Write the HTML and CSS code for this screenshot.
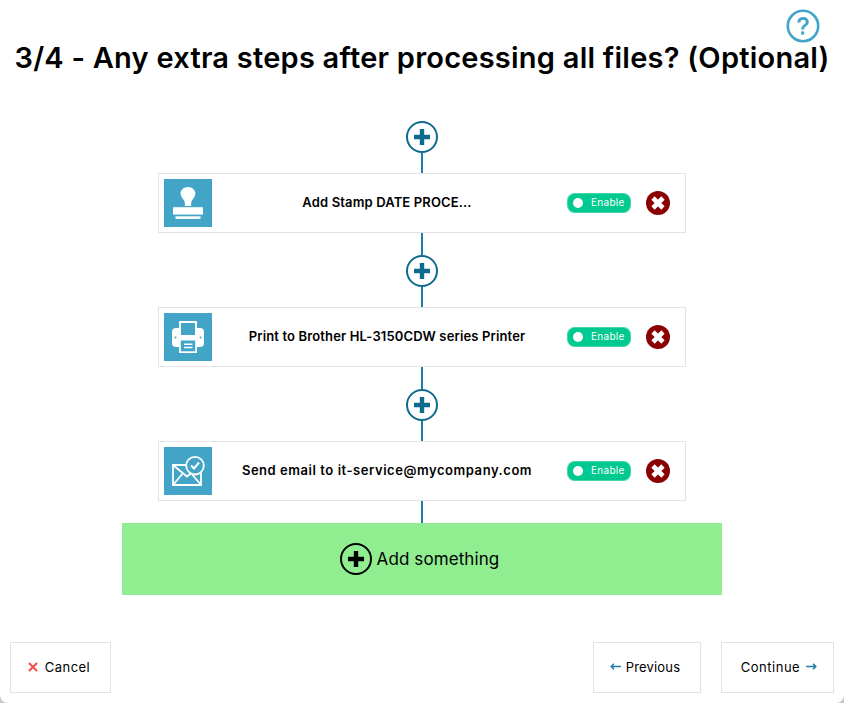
FILE: index.html
```html
<!DOCTYPE html>
<html lang="en">
<head>
<meta charset="utf-8">
<title>Extra steps</title>
<link rel="stylesheet" href="styles.css">
</head>
<body>
<main class="page">
  <a class="help" aria-label="Help">
    <svg width="34" height="34" viewBox="0 0 34 34"><circle cx="17" cy="17" r="15.200" fill="none" stroke="#42a5c8" stroke-width="2.600"/><path d="M11.400 13.400c0-3.200 2.400-5.300 5.700-5.300 3.200 0 5.600 1.900 5.600 4.800 0 2.200-1.200 3.300-2.700 4.400-1.400 1-1.900 1.700-1.900 3.300h-2.900c0-2.600.8-3.700 2.500-4.900 1.300-1 2-1.600 2-2.700 0-1.300-1-2.200-2.600-2.200-1.700 0-2.700 1-2.800 2.600z" fill="#42a5c8"/><rect x="15.100" y="22.400" width="3.100" height="3.200" fill="#42a5c8"/></svg>
  </a>
  <h1 class="title">3/4 - Any extra steps after processing all files? (Optional)</h1>
  <section class="flow">
    <button class="add-node" aria-label="Add step"><svg class="plus" viewBox="0 0 32 32"><circle cx="16" cy="16" r="15" fill="#fff" stroke="#0f6b8d" stroke-width="2"/><path d="M16 8v16M8 16h16" stroke="#0f6b8d" stroke-width="4.400"/></svg></button>
    <div class="line"></div>
    <article class="card">
      <div class="thumb">
        <svg width="48" height="48" viewBox="0 0 48 48"><path d="M24 8c-4.200 0-7.400 2.900-7.400 6.600 0 2.600 1.500 4.300 2.800 6 .9 1.300 1.500 2.600 1.500 4.400v2h6.200v-2c0-1.800.6-3.100 1.500-4.400 1.300-1.700 2.800-3.400 2.800-6C31.400 10.900 28.200 8 24 8z" fill="#fff"/><path d="M9 28.200h30v7.400H9z" fill="#fff"/><path d="M11.500 37.300h25v2.600h-25z" fill="#fff"/></svg>
      </div>
      <div class="name">Add Stamp DATE PROCE...</div>
      <div class="toggle"><span class="knob"></span><span class="toggle-text">Enable</span></div>
      <button class="remove" aria-label="Remove"><svg viewBox="0 0 24 24" width="24" height="24"><circle cx="12" cy="12" r="12" fill="#8b0000"/><path d="M7 7l10 10M17 7L7 17" stroke="#fff" stroke-width="4.600"/></svg></button>
    </article>
    <div class="line"></div>
    <button class="add-node" aria-label="Add step"><svg class="plus" viewBox="0 0 32 32"><circle cx="16" cy="16" r="15" fill="#fff" stroke="#0f6b8d" stroke-width="2"/><path d="M16 8v16M8 16h16" stroke="#0f6b8d" stroke-width="4.400"/></svg></button>
    <div class="line"></div>
    <article class="card">
      <div class="thumb">
        <svg width="48" height="48" viewBox="0 0 48 48"><rect x="15" y="8" width="18" height="14" rx="1" fill="#fff"/><rect x="8" y="15" width="32" height="19" rx="4" fill="#fff"/><rect x="17" y="10" width="14" height="12" fill="#42a5c8"/><rect x="15" y="26" width="18" height="14" fill="#fff"/><rect x="16.800" y="27.500" width="14.400" height="10.800" fill="#42a5c8"/><path d="M20 30.600h8.500v1.400H20zM20 33.800h8.500v1.400H20z" fill="#fff"/><circle cx="11.500" cy="24.500" r="1" fill="#42a5c8"/><circle cx="36.500" cy="24.500" r="1" fill="#42a5c8"/></svg>
      </div>
      <div class="name">Print to Brother HL-3150CDW series Printer</div>
      <div class="toggle"><span class="knob"></span><span class="toggle-text">Enable</span></div>
      <button class="remove" aria-label="Remove"><svg viewBox="0 0 24 24" width="24" height="24"><circle cx="12" cy="12" r="12" fill="#8b0000"/><path d="M7 7l10 10M17 7L7 17" stroke="#fff" stroke-width="4.600"/></svg></button>
    </article>
    <div class="line"></div>
    <button class="add-node" aria-label="Add step"><svg class="plus" viewBox="0 0 32 32"><circle cx="16" cy="16" r="15" fill="#fff" stroke="#0f6b8d" stroke-width="2"/><path d="M16 8v16M8 16h16" stroke="#0f6b8d" stroke-width="4.400"/></svg></button>
    <div class="line"></div>
    <article class="card">
      <div class="thumb">
        <svg width="48" height="48" viewBox="0 0 48 48"><path d="M9 18h28v20H9z" fill="none" stroke="#fff" stroke-width="1.800"/><path d="M9 18l14 11.500L37 18M9 38l10.500-12.500M37 38L26.500 25.500" fill="none" stroke="#fff" stroke-width="1.800"/><circle cx="31" cy="18.700" r="8.800" fill="#42a5c8" stroke="#fff" stroke-width="1.800"/><path d="M27 18.500l3 3 5-6" fill="none" stroke="#fff" stroke-width="2"/></svg>
      </div>
      <div class="name name-wide">Send email to it-service@mycompany.com</div>
      <div class="toggle"><span class="knob"></span><span class="toggle-text">Enable</span></div>
      <button class="remove" aria-label="Remove"><svg viewBox="0 0 24 24" width="24" height="24"><circle cx="12" cy="12" r="12" fill="#8b0000"/><path d="M7 7l10 10M17 7L7 17" stroke="#fff" stroke-width="4.600"/></svg></button>
    </article>
    <div class="line"></div>
    <button class="add-something">
      <svg class="plus" viewBox="0 0 32 32"><circle cx="16" cy="16" r="15" fill="none" stroke="#000" stroke-width="2"/><path d="M16 8v16M8 16h16" stroke="#000" stroke-width="4.400"/></svg>
      <span>Add something</span>
    </button>
  </section>
  <footer class="footer">
    <button class="btn btn-cancel"><svg class="cancel-x" width="10" height="10" viewBox="0 0 10 10"><path d="M1 1l8 8M9 1L1 9" stroke="#f44a4a" stroke-width="2"/></svg>Cancel</button>
    <div class="footer-right">
      <button class="btn btn-prev"><svg class="arrow-left" width="11" height="7" viewBox="0 0 11 7"><path d="M11 3.500H2M4 .8L1.200 3.500 4 6.200" fill="none" stroke="#1a7fa6" stroke-width="1.500"/></svg>Previous</button>
      <button class="btn btn-next">Continue<svg class="arrow-right" width="11" height="7" viewBox="0 0 11 7"><path d="M0 3.500h9M7 .8l2.800 2.700L7 6.200" fill="none" stroke="#1a7fa6" stroke-width="1.500"/></svg></button>
    </div>
  </footer>
</main>
</body>
</html>
```
FILE: styles.css
```css
* { box-sizing: border-box; }
html, body { margin: 0; height: 100%; background: #c9c9c9; }
body { font-family: Inter, "Liberation Sans", sans-serif; color: #000; }
button { font: inherit; color: inherit; background: none; border: 0; padding: 0; margin: 0; cursor: pointer; }
.page {
  position: relative;
  width: 844px;
  height: 703px;
  background: #fff;
  border-radius: 0 0 8px 8px;
  overflow: hidden;
  display: flex;
  flex-direction: column;
}
.help { position: absolute; left: 786px; top: 9px; width: 34px; height: 34px; }
.help svg { display: block; }
.title {
  margin: 37px 0 0;
  height: 41px;
  font-size: 29px;
  line-height: 41px;
  font-weight: 600;
  text-align: center;
  white-space: nowrap;
  letter-spacing: 0.24px;
}
.flow {
  margin-top: 43px;
  display: flex;
  flex-direction: column;
  align-items: center;
}
.add-node { display: block; width: 32px; height: 32px; }
.plus { display: block; width: 32px; height: 32px; }
.line { width: 2px; height: 20px; background: #1a7fa6; flex: none; }
.card + .line { height: 22px; }
.card {
  width: 528px;
  height: 60px;
  border: 1px solid #e3e3e3;
  padding: 5px;
  display: flex;
  align-items: center;
  background: #fff;
}
.thumb { width: 48px; height: 48px; background: #42a5c8; flex: none; }
.thumb svg { display: block; }
.name {
  flex: 1;
  min-width: 0;
  margin-right: 5px;
  text-align: center;
  font-size: 13px;
  font-weight: 600;
  white-space: nowrap;
  letter-spacing: 0.14px;
  line-height: 18px;
  padding-bottom: 2px;
}
.name-wide { letter-spacing: 0.55px; }
.toggle {
  width: 64px;
  height: 20px;
  border-radius: 8px;
  background: #02c98f;
  box-shadow: inset 0 0 0 1px rgba(255, 255, 255, 0.25);
  color: #fff;
  display: flex;
  align-items: center;
  padding-left: 6px;
  flex: none;
  margin-right: 15px;
}
.knob { width: 10px; height: 10px; border-radius: 50%; background: #fff; flex: none; }
.toggle-text { margin-left: 8px; font-size: 10px; line-height: 18px; padding-bottom: 2px; letter-spacing: 0.3px; }
.remove { width: 24px; height: 24px; flex: none; margin-right: 10px; }
.remove svg { display: block; }
.add-something {
  width: 600px;
  height: 72px;
  padding-right: 5px;
  background: #90ee90;
  display: flex;
  align-items: center;
  justify-content: center;
  gap: 5px;
  font-size: 17px;
  letter-spacing: 0.1px;
}
.footer {
  margin-top: 47px;
  padding: 0 10px;
  display: flex;
  justify-content: space-between;
}
.footer-right { display: flex; gap: 20px; }
.btn {
  height: 51px;
  border: 1px solid #e3e3e3;
  background: #fff;
  font-size: 13px;
  letter-spacing: 0.15px;
  line-height: 18px;
  padding-bottom: 2px;
  display: flex;
  align-items: center;
  justify-content: center;
}
.btn-cancel { width: 101px; padding-right: 3px; letter-spacing: 0.45px; }
.btn-prev { width: 108px; padding-right: 4px; }
.btn-next { width: 113px; padding-left: 3px; letter-spacing: 0.5px; }
.cancel-x { margin-right: 7px; }
.arrow-left { margin-right: 5px; }
.arrow-right { margin-left: 6px; }
```
